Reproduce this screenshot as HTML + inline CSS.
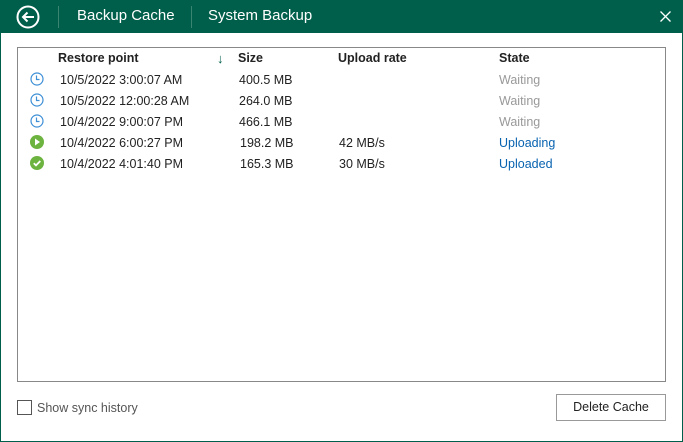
<!DOCTYPE html>
<html><head><style>
*{margin:0;padding:0;box-sizing:border-box}
body{width:683px;height:442px;background:#fff;font-family:"Liberation Sans",sans-serif;font-size:12.5px;color:#222;position:relative;overflow:hidden}
.frame{position:absolute;left:0;top:0;width:683px;height:442px;border:1px solid #005f4b}
.hdr{position:absolute;left:0;top:0;width:683px;height:33px;background:#005f4b;color:#fff}
.t{position:absolute;top:7px;font-size:15px}
.sep{position:absolute;top:6px;width:1px;height:22px;background:#3a8572}
.list{position:absolute;left:17px;top:47px;width:649px;height:335px;border:1px solid #888}
.a{position:absolute;white-space:nowrap}
.h{font-weight:bold;top:51px}
.w{color:#999}.b{color:#0863b0}
.cb{position:absolute;left:17px;top:400px;width:15px;height:15px;border:1px solid #555}
.btn{position:absolute;left:556px;top:394px;width:110px;height:27px;border:1px solid #999;text-align:center;line-height:25px}
</style></head><body>
<div class="frame"></div>
<div class="hdr">
<svg style="position:absolute;left:16px;top:5px" width="24" height="24" viewBox="0 0 24 24"><circle cx="12" cy="12" r="10.5" fill="none" stroke="#fff" stroke-width="2"/><path d="M18 12H7M11.5 7.5L7 12l4.5 4.5" fill="none" stroke="#fff" stroke-width="2"/></svg>
<div class="sep" style="left:58px"></div>
<div class="t" style="left:77px">Backup Cache</div>
<div class="sep" style="left:191px"></div>
<div class="t" style="left:208px">System Backup</div>
<svg style="position:absolute;left:660px;top:11px" width="11" height="11" viewBox="0 0 11 11"><path d="M0.5 0.5L10.5 10.5M10.5 0.5L0.5 10.5" stroke="#fff" stroke-width="1.3"/></svg>
</div>
<div class="list"></div>
<div class="a h" style="left:58px">Restore point</div>
<div class="a" style="left:217px;top:51px;color:#005f4b;font-size:13px">↓</div>
<div class="a h" style="left:238px">Size</div>
<div class="a h" style="left:338px">Upload rate</div>
<div class="a h" style="left:499px">State</div>

<svg class="a" style="left:30px;top:72px" width="14" height="14"><circle cx="7" cy="7" r="6" fill="none" stroke="#3d8fd6" stroke-width="1.2"/><path d="M6.5 3.5V7.5H9.5" fill="none" stroke="#3d8fd6" stroke-width="1.2"/></svg>
<div class="a" style="left:60px;top:73px">10/5/2022 3:00:07 AM</div><div class="a" style="left:239px;top:73px">400.5 MB</div><div class="a w" style="left:499px;top:73px">Waiting</div>

<svg class="a" style="left:30px;top:93px" width="14" height="14"><circle cx="7" cy="7" r="6" fill="none" stroke="#3d8fd6" stroke-width="1.2"/><path d="M6.5 3.5V7.5H9.5" fill="none" stroke="#3d8fd6" stroke-width="1.2"/></svg>
<div class="a" style="left:60px;top:94px">10/5/2022 12:00:28 AM</div><div class="a" style="left:239px;top:94px">264.0 MB</div><div class="a w" style="left:499px;top:94px">Waiting</div>

<svg class="a" style="left:30px;top:114px" width="14" height="14"><circle cx="7" cy="7" r="6" fill="none" stroke="#3d8fd6" stroke-width="1.2"/><path d="M6.5 3.5V7.5H9.5" fill="none" stroke="#3d8fd6" stroke-width="1.2"/></svg>
<div class="a" style="left:60px;top:115px">10/4/2022 9:00:07 PM</div><div class="a" style="left:239px;top:115px">466.1 MB</div><div class="a w" style="left:499px;top:115px">Waiting</div>

<svg class="a" style="left:30px;top:135px" width="14" height="14"><circle cx="7" cy="7" r="7" fill="#6db33f"/><path d="M5 3.5L10 7L5 10.5Z" fill="#fff"/></svg>
<div class="a" style="left:60px;top:136px">10/4/2022 6:00:27 PM</div><div class="a" style="left:240px;top:136px">198.2 MB</div><div class="a" style="left:339px;top:136px">42 MB/s</div><div class="a b" style="left:499px;top:136px">Uploading</div>

<svg class="a" style="left:30px;top:156px" width="14" height="14"><circle cx="7" cy="7" r="7" fill="#6db33f"/><path d="M3.8 7.2L6 9.4L10.3 5" fill="none" stroke="#fff" stroke-width="1.8"/></svg>
<div class="a" style="left:60px;top:157px">10/4/2022 4:01:40 PM</div><div class="a" style="left:240px;top:157px">165.3 MB</div><div class="a" style="left:339px;top:157px">30 MB/s</div><div class="a b" style="left:499px;top:157px">Uploaded</div>

<div class="cb"></div>
<div class="a" style="left:37px;top:401px;color:#555">Show sync history</div>
<div class="btn">Delete Cache</div>
</body></html>
